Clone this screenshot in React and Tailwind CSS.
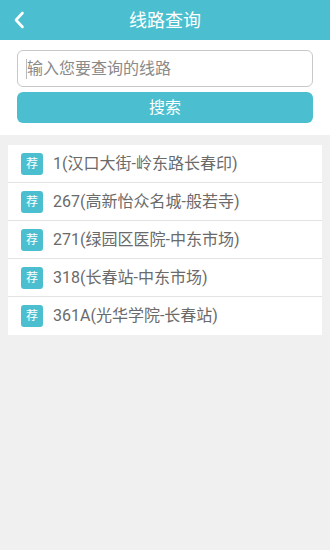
import React from 'react';

const routes = [
  '1(汉口大街-岭东路长春印)',
  '267(高新怡众名城-般若寺)',
  '271(绿园区医院-中东市场)',
  '318(长春站-中东市场)',
  '361A(光华学院-长春站)',
];

const font = { fontFamily: '"Roboto", "Noto Sans CJK SC", sans-serif' };

export default function App() {
  return (
    <div className="w-[330px] h-[550px] bg-[#f0f0f0] flex flex-col" style={font}>
      {/* 顶部栏 */}
      <div className="h-[40px] bg-[#4bbfcf] flex items-center relative shrink-0">
        <svg className="absolute left-[13px] top-[11px]" width="12" height="18" viewBox="0 0 12 18">
          <path d="M9.5 2 L3 9 L9.5 16" fill="none" stroke="#fff" strokeWidth="2.6" strokeLinecap="round" strokeLinejoin="round" />
        </svg>
        <div className="flex-1 text-center text-white text-[18px]">线路查询</div>
      </div>

      {/* 搜索区 */}
      <div className="bg-white px-[17px] pt-[10px] pb-[12px] flex flex-col gap-[5px] shrink-0">
        <div className="h-[37px] border border-[#c8c8c8] rounded-[6px] flex items-center px-[8px]">
          <div className="w-px h-[20px] bg-[#bbb]" />
          <span className="text-[16px] text-[#8a8a8a]">输入您要查询的线路</span>
        </div>
        <div className="h-[31px] bg-[#4bbfcf] rounded-[6px] flex items-center justify-center text-white text-[16px]">
          搜索
        </div>
      </div>

      {/* 列表 */}
      <div className="mt-[10px] mx-[8px] bg-white">
        {routes.map((r, i) => (
          <div
            key={r}
            className={`h-[38px] flex items-center pl-[13px] ${i < routes.length - 1 ? 'border-b border-[#e3e3e3]' : ''}`}
          >
            <div className="w-[22px] h-[22px] rounded-[3px] bg-[#4bbfcf] text-white text-[12px] flex items-center justify-center">
              荐
            </div>
            <span className="ml-[10px] text-[16px] text-[#6a6a6a]">{r}</span>
          </div>
        ))}
      </div>
    </div>
  );
}
